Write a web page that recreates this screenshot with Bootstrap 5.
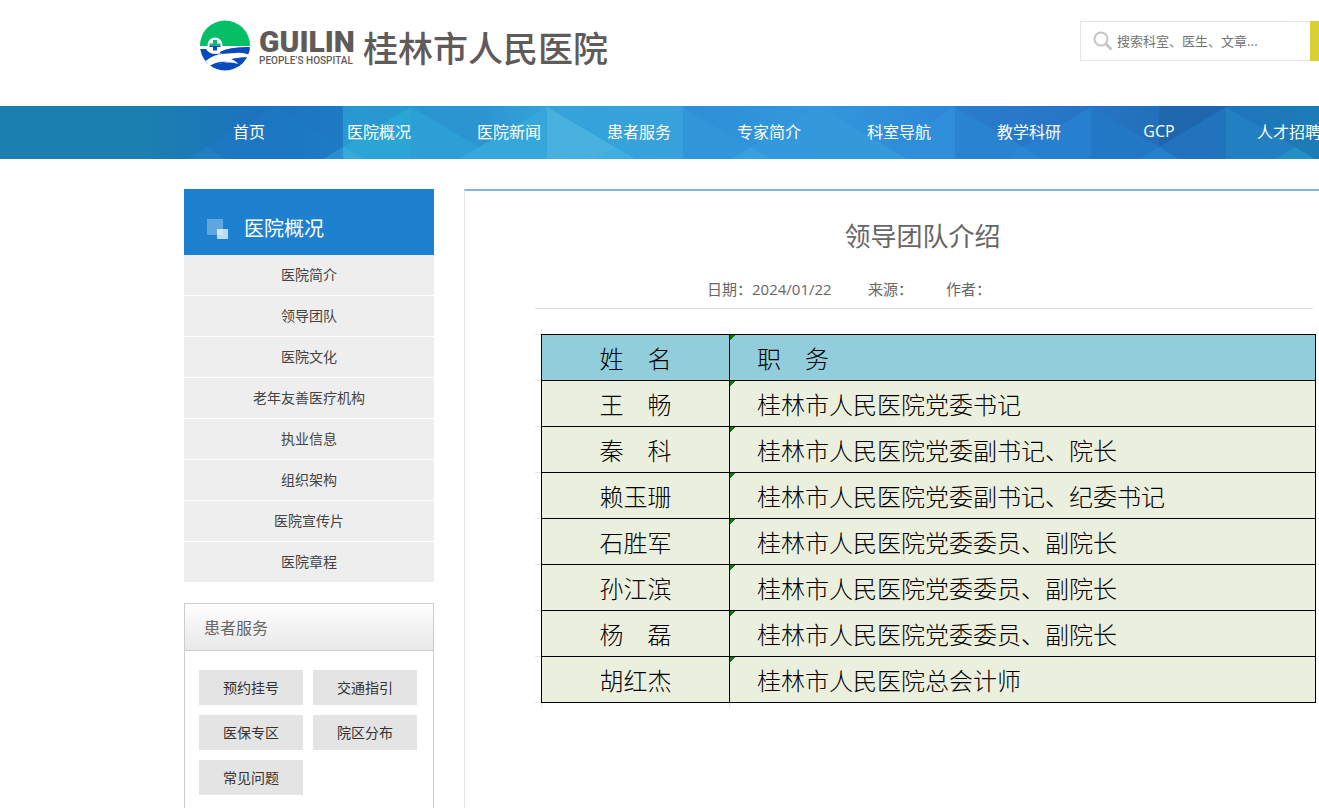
<!DOCTYPE html>
<html lang="zh-CN">
<head>
<meta charset="utf-8">
<meta name="viewport" content="width=device-width, initial-scale=1">
<title>领导团队介绍 - 桂林市人民医院</title>
<link href="https://cdn.jsdelivr.net/npm/bootstrap@5.3.0/dist/css/bootstrap.min.css" rel="stylesheet">
<style>
:root { --gutter: 184px; }
body { font-family: "Noto Sans CJK SC", sans-serif; font-size: 14px; color: #444; background: #fff; overflow-x: hidden; }
a { text-decoration: none; color: inherit; }
.site-header { height: 106px; padding-left: 200px; }
.brand { color: #5f5b5a; margin-top: 20px; }
.brand-latin { font-family: Roboto, sans-serif; font-weight: 700; margin-left: 9px; width: 104px; padding-top: 4px; }
.brand-latin b { font-size: 30px; line-height: 36px; display: block; }
.brand-latin span { font-size: 10px; font-weight: 500; line-height: 2px; display: block; white-space: nowrap; }
.brand-name { font-size: 35px; line-height: 54px; white-space: nowrap; font-weight: 500; }
.search { margin-top: 21px; height: 40px; }
.search-box { width: 230px; border: 1px solid #e5e5e5; border-right: 0; padding-left: 12px; }
.search-box input { font-size: 13px; border: 0; outline: 0; width: 190px; padding: 0; color: #757575; background: none; }
.search-box input::placeholder { color: #757575; opacity: 1; }
.search button { width: 9px; border: 0; padding: 0; background: #d7d034; }
.main-nav { height: 53px; padding-left: var(--gutter); background: #1b7fb0; }
.main-nav svg { top: 0; left: 0; }
.main-nav ul { list-style: none; }
.main-nav a { display: block; width: 130px; line-height: 50px; font-size: 16px; color: #fff; text-align: center; white-space: nowrap; }
.latin-text { font-family: "Open Sans", "Noto Sans CJK SC", sans-serif; }
.page { padding-left: var(--gutter); padding-top: 30px; gap: 30px; }
.side { width: 250px; }
.side-title { height: 66px; background: #1e81d0; color: #fff; font-size: 20px; line-height: 30px; padding: 24px 0 0 23px; margin: 0; font-weight: 400; gap: 16px; }
.side-title svg { margin-top: 6px; }
.side-menu a { display: block; background: #eee; line-height: 38px; padding-bottom: 2px; text-align: center; margin-bottom: 1px; color: #444; }
.panel { border: 1px solid #ccc; margin-top: 21px; min-height: 230px; }
.panel h2 { margin: 0; height: 47px; line-height: 46px; padding-left: 19px; font-size: 16px; font-weight: 400; color: #666; border-bottom: 1px solid #ccc; background: linear-gradient(#fff, #e8e8e8); }
.panel-links { display: grid; grid-template-columns: 104px 104px; gap: 10px; padding: 19px 14px; }
.panel-links a { background: #e4e4e4; line-height: 35px; text-align: center; color: #333; }
.article { border-top: 2px solid #82b8e2; border-left: 1px solid #e5e5e5; min-height: 640px; padding: 24px 3px 0 70px; min-width: 0; }
.article h1 { font-size: 26px; line-height: 40px; margin: 0 6px 0 0; font-weight: 400; color: #666; text-align: center; }
.meta { font-size: 15px; line-height: 24px; color: #666; margin-top: 22px; padding-bottom: 7px; margin-right: 3px; border-bottom: 1px solid #ddd; padding-left: 172px; gap: 33px; }
.meta span { white-space: nowrap; }
.meta .latin-text { width: 128px; }
/* faint sheet lines that stick out round the table */
.sheet { margin-top: 20px; padding: 5px 0 5px 6px;
  background:
    linear-gradient(#e6e6e6, #e6e6e6) 6px 0 / 1px 100% no-repeat,
    linear-gradient(#e6e6e6, #e6e6e6) 194px 0 / 1px 100% no-repeat,
    repeating-linear-gradient(#e6e6e6 0 1px, transparent 1px 46px) 0 5px / 6px 369px no-repeat; }
.staff { width: 100%; border-collapse: collapse; table-layout: fixed; color: #000; font-size: 24px; line-height: 30px; }
.staff th, .staff td { height: 46px; border: 1px solid #000; padding: 0; font-weight: 300; background: #ebf0de; }
.staff th:first-child, .staff td:first-child { width: 188px; text-align: center; }
.staff th:last-child, .staff td:last-child { padding-left: 27px; text-align: left; background: linear-gradient(135deg, #087b08 4px, transparent 4px) no-repeat, #ebf0de; }
.staff thead th:first-child { background: #92cddc; }
.staff thead th:last-child { background: linear-gradient(135deg, #087b08 4px, transparent 4px) no-repeat, #92cddc; }
</style>
</head>
<body>
<header class="site-header d-flex justify-content-between align-items-start">
  <a href="#" class="brand d-flex">
    <svg width="50" height="52" viewBox="0 0 50 52" aria-hidden="true">
      <defs><clipPath id="disc"><circle cx="25" cy="25.500" r="25"/></clipPath></defs>
      <g clip-path="url(#disc)">
        <rect width="50" height="52" fill="#fff"/>
        <rect width="50" height="26" fill="#04bf65"/>
        <path d="M0 29H6C9 34 15 35 21 33C15 36 8 39 4 43L0 40Z" fill="#0a4abf"/>
        <path d="M20 32C30 27 42 27 50 29V33C40 31 32 34 24 36C16 37 9 41 7 46L4 43C8 38 14 36 22 34Z" fill="#0a4abf"/>
        <path d="M20 32C27 28 40 27 50 27V35C40 31 32 32 20 33.500Z" fill="#0a4abf"/>
        <path d="M4 43C10 36 18 34 28 33.500C38 33 44 34 50 36V38C38 35 26 37 17 42C12 44 9 46 8 48Z" fill="#fff"/>
        <path d="M50 37C43 37 35 38 31 39C34 40 37 42 38 44C28 41 18 43 12 47V52H50Z" fill="#0a4abf"/>
        <path d="M8 47C14 42 22 41 28 42C20 43 15 45 13 49Z" fill="#0a4abf"/>
      </g>
      <circle cx="15" cy="25" r="7.500" fill="#fff"/>
      <path d="M13 20h4v3.500h3.500v2H9.500v-2H13z" fill="#04bf65"/>
      <path d="M9.500 25.500h11v1.500H17v3.500h-4V27H9.500z" fill="#0a4abf"/>
    </svg>
    <span class="brand-latin"><b>GUILIN</b><span>PEOPLE’S HOSPITAL</span></span>
    <span class="brand-name">桂林市人民医院</span>
  </a>
  <form class="search d-flex">
    <label class="search-box d-flex align-items-center gap-1">
      <svg width="20" height="20" viewBox="0 0 20 20" fill="none" stroke="#c5c5c5" aria-hidden="true"><circle cx="8" cy="8" r="6.500" stroke-width="2"/><path d="M13 13l5.500 5.500" stroke-width="3"/></svg>
      <input type="text" placeholder="搜索科室、医生、文章..." aria-label="搜索">
    </label>
    <button type="submit" aria-label="搜索"></button>
  </form>
</header>

<nav class="main-nav position-relative overflow-hidden">
  <svg class="position-absolute" width="1568" height="53" viewBox="0 0 1568 53" aria-hidden="true">
    <defs>
      <linearGradient id="deep" gradientUnits="userSpaceOnUse" x1="150" y1="0" x2="343" y2="0"><stop offset="0" stop-color="#1b7fb0"/><stop offset=".55" stop-color="#1c72bf"/><stop offset="1" stop-color="#1e7ac2"/></linearGradient>
      <linearGradient id="cyan" gradientUnits="userSpaceOnUse" x1="343" y1="0" x2="683" y2="0"><stop offset="0" stop-color="#2799d0"/><stop offset=".4" stop-color="#2b94d1"/><stop offset=".6" stop-color="#33a4da"/><stop offset="1" stop-color="#38a1dc"/></linearGradient>
      <linearGradient id="azure" gradientUnits="userSpaceOnUse" x1="683" y1="0" x2="955" y2="0"><stop offset="0" stop-color="#2e8fd7"/><stop offset=".5" stop-color="#3298dc"/><stop offset="1" stop-color="#2d86d8"/></linearGradient>
      <linearGradient id="royal" gradientUnits="userSpaceOnUse" x1="955" y1="0" x2="1226" y2="0"><stop offset="0" stop-color="#2a7ccd"/><stop offset=".5" stop-color="#2675c5"/><stop offset="1" stop-color="#1f68ae"/></linearGradient>
      <linearGradient id="teal" gradientUnits="userSpaceOnUse" x1="1226" y1="0" x2="1360" y2="0"><stop offset="0" stop-color="#1f74bd"/><stop offset="1" stop-color="#1b80b2"/></linearGradient>
    </defs>
    <rect x="150" width="193" height="53" fill="url(#deep)"/>
    <rect x="343" width="340" height="53" fill="url(#cyan)"/>
    <rect x="683" width="272" height="53" fill="url(#azure)"/>
    <rect x="955" width="271" height="53" fill="url(#royal)"/>
    <rect x="1226" width="134" height="53" fill="url(#teal)"/>
    <path d="M275 1L343 41V53H187Z" fill="#1f7cc8" opacity=".4"/>
    <path d="M343 41L323 53H343Z" fill="#2b8fcf"/>
    <path d="M411 1L343 41V53H411Z" fill="#2ba5d6"/>
    <path d="M411 1L479 41V53H411Z" fill="#2c9fd7"/>
    <path d="M547 1L479 41V53H547Z" fill="#35a7da"/>
    <path d="M547 1L635 53H547Z" fill="#49b1e0"/>
    <path d="M615 41L595 53H635Z" fill="#41aee0"/>
    <path d="M343 41L364 53H343Z" fill="#37abd8"/>
    <path d="M479 41L459 53H499Z" fill="#37a8db"/>
    <path d="M683 1L751 41V53H683Z" fill="#3195da"/>
    <path d="M819 1L751 41V53H819Z" fill="#3399dc"/>
    <path d="M819 1L907 53H819Z" fill="#3499db"/>
    <path d="M751 41L731 53H771Z" fill="#38a0dc"/>
    <path d="M955 1L887 41V53H955Z" fill="#2e8ed9"/>
    <path d="M887 41L867 53H907Z" fill="#349ad9"/>
    <path d="M955 1L1023 41V53H955Z" fill="#2a83d1"/>
    <path d="M1091 1L1023 41V53H1091Z" fill="#2780cf"/>
    <path d="M1023 41L1003 53H1043Z" fill="#2b86d5"/>
    <path d="M1091 1L1159 41V53H1091Z" fill="#2378c5"/>
    <path d="M1159 0H1226L1159 41Z" fill="#1e66ad"/>
    <path d="M1226 1L1159 41V53H1226Z" fill="#2173bd"/>
    <path d="M1159 41L1139 53H1179Z" fill="#2681cc"/>
    <path d="M1226 1L1295 41V53H1226Z" fill="#217fc2"/>
    <path d="M1295 41L1275 53H1315Z" fill="#2590c4"/>
    <path d="M207 41L187 53H227Z" fill="#2584c4" opacity=".5"/>
  </svg>
  <ul class="d-flex m-0 p-0 position-relative">
    <li><a href="#">首页</a></li>
    <li><a href="#">医院概况</a></li>
    <li><a href="#">医院新闻</a></li>
    <li><a href="#">患者服务</a></li>
    <li><a href="#">专家简介</a></li>
    <li><a href="#">科室导航</a></li>
    <li><a href="#">教学科研</a></li>
    <li><a href="#" class="latin-text">GCP</a></li>
    <li><a href="#">人才招聘</a></li>
  </ul>
</nav>

<div class="page d-flex">
  <aside class="side flex-shrink-0">
    <h2 class="side-title d-flex">
      <svg width="21" height="20" viewBox="0 0 21 20" class="flex-shrink-0" aria-hidden="true"><path d="M0 0h16v16H0z" fill="#61a7df"/><path d="M10 10h11v10H10z" fill="#bbd9f1"/><path d="M10 10h6v6h-6z" fill="#d0e4f5"/></svg>
      <span>医院概况</span>
    </h2>
    <nav class="side-menu">
      <a href="#">医院简介</a>
      <a href="#">领导团队</a>
      <a href="#">医院文化</a>
      <a href="#">老年友善医疗机构</a>
      <a href="#">执业信息</a>
      <a href="#">组织架构</a>
      <a href="#">医院宣传片</a>
      <a href="#">医院章程</a>
    </nav>
    <section class="panel">
      <h2>患者服务</h2>
      <div class="panel-links">
        <a href="#">预约挂号</a>
        <a href="#">交通指引</a>
        <a href="#">医保专区</a>
        <a href="#">院区分布</a>
        <a href="#">常见问题</a>
      </div>
    </section>
  </aside>
  <main class="article flex-grow-1">
    <h1>领导团队介绍</h1>
    <div class="meta d-flex">
      <span class="latin-text">日期：2024/01/22</span><span>来源：</span><span>作者：</span>
    </div>
    <div class="sheet">
      <table class="staff">
        <thead><tr><th scope="col">姓　名</th><th scope="col">职　务</th></tr></thead>
        <tbody>
          <tr><td>王　畅</td><td>桂林市人民医院党委书记</td></tr>
          <tr><td>秦　科</td><td>桂林市人民医院党委副书记、院长</td></tr>
          <tr><td>赖玉珊</td><td>桂林市人民医院党委副书记、纪委书记</td></tr>
          <tr><td>石胜军</td><td>桂林市人民医院党委委员、副院长</td></tr>
          <tr><td>孙江滨</td><td>桂林市人民医院党委委员、副院长</td></tr>
          <tr><td>杨　磊</td><td>桂林市人民医院党委委员、副院长</td></tr>
          <tr><td>胡红杰</td><td>桂林市人民医院总会计师</td></tr>
        </tbody>
      </table>
    </div>
  </main>
</div>
<script src="https://cdn.jsdelivr.net/npm/bootstrap@5.3.0/dist/js/bootstrap.bundle.min.js"></script>
</body>
</html>
